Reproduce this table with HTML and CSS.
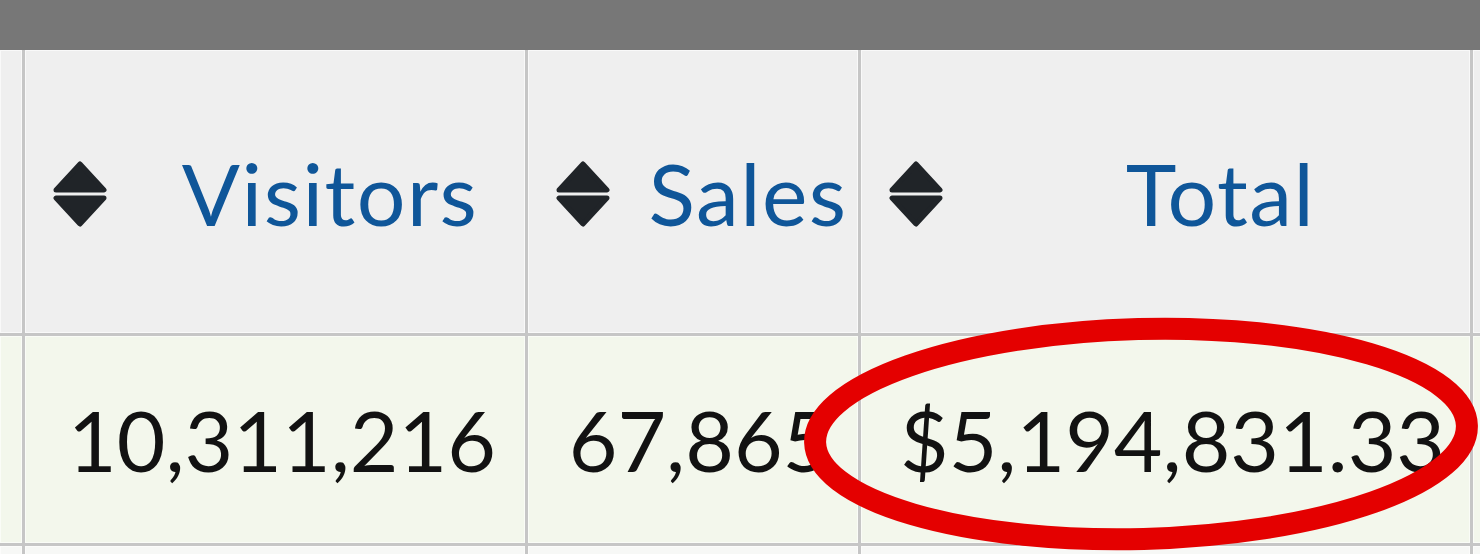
FILE: index.html
```html
<!DOCTYPE html>
<html lang="en">
<head>
  <meta charset="UTF-8">
  <title>Sales report</title>
  <link rel="stylesheet" href="styles.css">
</head>
<body>
  <div class="topbar"></div>

  <div class="report-grid">
    <div class="cell head"></div>
    <div class="cell head">
      <svg class="sort-icon" viewBox="0 0 54 66"><path d="M27 3 L51 29 L3 29 Z M3 37 L51 37 L27 63 Z"/></svg>
      <span class="head-label">Visitors</span>
    </div>
    <div class="cell head">
      <svg class="sort-icon" viewBox="0 0 54 66"><path d="M27 3 L51 29 L3 29 Z M3 37 L51 37 L27 63 Z"/></svg>
      <span class="head-label">Sales</span>
    </div>
    <div class="cell head">
      <svg class="sort-icon" viewBox="0 0 54 66"><path d="M27 3 L51 29 L3 29 Z M3 37 L51 37 L27 63 Z"/></svg>
      <span class="head-label">Total</span>
    </div>
    <div class="cell head"></div>

    <div class="cell data"></div>
    <div class="cell data">10,311,216</div>
    <div class="cell data">67,865</div>
    <div class="cell data">$5,194,831.33</div>
    <div class="cell data"></div>

    <div class="cell next"></div>
    <div class="cell next"></div>
    <div class="cell next"></div>
    <div class="cell next"></div>
    <div class="cell next"></div>
  </div>

  <!-- red marker drawn over the total -->
  <svg class="marker" viewBox="0 0 1480 554" width="1480" height="554">
    <ellipse cx="1141" cy="434" rx="326" ry="105" transform="rotate(-1.5 1141 434)"/>
  </svg>
</body>
</html>
```

FILE: styles.css
```css
body {
  margin: 0;
  width: 1480px;
  height: 554px;
  overflow: hidden;
  position: relative;
  background: #f8f8f8;
  font-family: 'Lato', 'Open Sans', sans-serif;
}
.topbar {
  height: 50px;
  background: #777777;
}
.report-grid {
  display: grid;
  grid-template-columns: 22px 500px 330px 609px 20px;
  grid-template-rows: 283px 207px 20px;
  gap: 3px;
  background: #c6c6c6;
}
.cell {
  display: flex;
  align-items: center;
  box-shadow: inset 0 0 0 1px rgba(255, 255, 255, 0.6);
}
.head {
  background: #efefef;
  padding-left: 28px;
}
.head:first-child, .head:last-child {
  padding-left: 0;
}
.sort-icon {
  width: 54px;
  height: 66px;
  flex-shrink: 0;
  margin-right: 28px;
  margin-top: 4px;
}
.sort-icon path {
  fill: #202428;
  stroke: #202428;
  stroke-width: 5;
  stroke-linejoin: round;
}
.head-label {
  flex: 1;
  text-align: center;
  color: #0f5699;
  font-size: 86px;
  letter-spacing: 1.5px;
  line-height: 1;
  margin-top: 2px;
}
.data {
  background: #f3f7ec;
  justify-content: center;
  padding-left: 14px;
  color: #121212;
  font-size: 84px;
  line-height: 1;
}
.next {
  background: #f7f8f6;
}
.marker {
  position: absolute;
  left: 0;
  top: 0;
  pointer-events: none;
}
.marker ellipse {
  fill: none;
  stroke: #e40000;
  stroke-width: 22;
}
```
